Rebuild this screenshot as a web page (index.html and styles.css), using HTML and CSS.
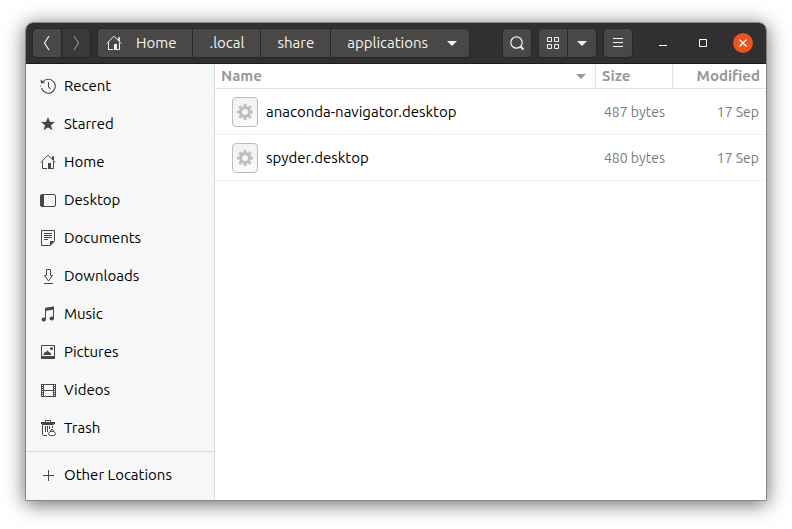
FILE: index.html
```html
<!DOCTYPE html>
<html lang="en">
<head>
<meta charset="utf-8">
<meta name="viewport" content="width=device-width, initial-scale=1">
<title>applications</title>
<link rel="stylesheet" href="styles.css">
</head>
<body>
<svg class="defs" aria-hidden="true">
  <symbol id="home" viewBox="0 0 16 16">
    <path d="M.7 8.5 8 1.2l7.300 7.300M2.500 7.500v7H7M13.500 7.500v7h-2.500M12.500 5V2.500h1V6" fill="none" stroke="currentColor"/>
    <path d="M8 9h3v6H8z" fill="currentColor"/>
  </symbol>
  <symbol id="gear" viewBox="0 0 16 16">
    <circle cx="8" cy="8" r="4.500" fill="none" stroke="currentColor" stroke-width="3"/>
    <path d="M8 0v3M8 13v3M0 8h3M13 8h3M2.300 2.300l2.200 2.200M11.500 11.500l2.200 2.200M2.300 13.700l2.200-2.200M11.500 4.500l2.200-2.200" stroke="currentColor" stroke-width="3"/>
  </symbol>
</svg>
<div class="window">
  <header class="headerbar">
    <nav class="group" aria-label="History">
      <button class="btn" aria-label="Back"><svg class="icon" viewBox="0 0 16 16"><path d="M10 1 5.500 8l4.500 7" fill="none" stroke="currentColor" stroke-width="1.200"/></svg></button>
      <button class="btn inactive" aria-label="Forward" disabled><svg class="icon" viewBox="0 0 16 16"><path d="M6 1l4.500 7L6 15" fill="none" stroke="currentColor" stroke-width="1.200"/></svg></button>
    </nav>
    <nav class="group path" aria-label="Path">
      <button class="btn crumb crumb-home"><svg class="icon"><use href="#home"/></svg><span>Home</span></button>
      <button class="btn crumb">.local</button>
      <button class="btn crumb">share</button>
      <button class="btn crumb crumb-current"><span>applications</span><svg class="arrow" viewBox="0 0 10 5"><path d="M0 0h10L5 5z" fill="currentColor"/></svg></button>
    </nav>
    <div class="spacer"></div>
    <div class="group">
      <button class="btn" aria-label="Search"><svg class="icon" viewBox="0 0 16 16"><circle cx="7.500" cy="7.500" r="5.700" fill="none" stroke="currentColor" stroke-width="1.200"/><path d="m11.500 11.500 3 3" stroke="currentColor" stroke-width="1.800"/></svg></button>
    </div>
    <div class="group">
      <button class="btn" aria-label="Icon view"><svg class="icon" viewBox="0 0 16 16"><path d="M2.500 2.500h4v4h-4zM9.500 2.500h4v4h-4zM2.500 9.500h4v4h-4zM9.500 9.500h4v4h-4z" fill="none" stroke="currentColor"/></svg></button>
      <button class="btn" aria-label="View options"><svg class="arrow" viewBox="0 0 10 5"><path d="M0 0h10L5 5z" fill="currentColor"/></svg></button>
    </div>
    <div class="group">
      <button class="btn" aria-label="Menu"><svg class="icon" viewBox="0 0 16 16"><path d="M3 3.500h10M3 7.500h10M3 11.500h10" stroke="currentColor"/></svg></button>
    </div>
    <div class="controls">
      <button class="control" aria-label="Minimize"><svg class="icon" viewBox="0 0 16 16"><path d="M4 10.500h8" stroke="currentColor"/></svg></button>
      <button class="control" aria-label="Maximize"><svg class="icon" viewBox="0 0 16 16"><path d="M4.500 4.500h7v7h-7z" fill="none" stroke="currentColor"/></svg></button>
      <button class="control close" aria-label="Close"><svg class="icon" viewBox="0 0 16 16"><path d="m4.500 4.500 7 7M11.500 4.500l-7 7" stroke="currentColor" stroke-width="1.300"/></svg></button>
    </div>
  </header>
  <div class="content">
    <aside class="sidebar">
      <nav class="places" aria-label="Places">
        <a href="#recent"><svg class="icon" viewBox="0 0 16 16"><path d="M2.800 3.800A7 7 0 1 1 1.500 10" fill="none" stroke="currentColor" stroke-width="1.100"/><path d="M.500 1.500 1 5.500l4-.500z" fill="currentColor"/><path d="M8.500 4v4.500l2 2.500" fill="none" stroke="currentColor" stroke-width="1.100"/><path d="M.800 7.500v1" stroke="currentColor"/></svg><span>Recent</span></a>
        <a href="#starred"><svg class="icon" viewBox="0 0 16 16"><path d="m8 1 1.900 4.800 5.100.300-4 3.200 1.400 5L8 11.500l-4.400 2.800 1.400-5-4-3.200 5.100-.300z" fill="currentColor"/></svg><span>Starred</span></a>
        <a href="#home-folder"><svg class="icon"><use href="#home"/></svg><span>Home</span></a>
        <a href="#desktop"><svg class="icon" viewBox="0 0 16 16"><rect x=".5" y="2.500" width="15" height="12" rx="1.500" fill="none" stroke="currentColor"/><path d="M1 3h3v11H1z" fill="currentColor"/></svg><span>Desktop</span></a>
        <a href="#documents"><svg class="icon" viewBox="0 0 16 16"><path d="M1.500.500h13v10l-4.500 5H1.500z" fill="none" stroke="currentColor"/><path d="M10 11h5l-5 5z" fill="currentColor"/><path d="M4 3.500h8M4 5.500h8M4 7.500h8M4 9.500h4" stroke="currentColor"/></svg><span>Documents</span></a>
        <a href="#downloads"><svg class="icon" viewBox="0 0 16 16"><path d="M6.500 1.500h4v6h2L8.500 13l-4-5.500h2zM4 15.500h9" fill="none" stroke="currentColor"/></svg><span>Downloads</span></a>
        <a href="#music"><svg class="icon" viewBox="0 0 16 16"><path d="M5.500 13V2.500L13.500 1v11" fill="none" stroke="currentColor"/><path d="M5 2 14 .500v3L5 5z" fill="currentColor"/><ellipse cx="3.800" cy="13.500" rx="2.200" ry="1.900" fill="currentColor"/><ellipse cx="11.800" cy="12.500" rx="2.200" ry="1.900" fill="currentColor"/></svg><span>Music</span></a>
        <a href="#pictures"><svg class="icon" viewBox="0 0 16 16"><path d="M1.500 1.500h13v13h-13z" fill="none" stroke="currentColor"/><path d="M1 12h14v3H1zM3 11l2-3.500 1 1L7.500 6l1.500 2.500L10 8l1.500 3z" fill="currentColor"/><circle cx="11.500" cy="4.500" r="1.500" fill="currentColor"/></svg><span>Pictures</span></a>
        <a href="#videos"><svg class="icon" viewBox="0 0 16 16"><path d="M3.500 2v13M13.500 2v13M3 2.500h11M3 8.500h11M3 14.500h11" stroke="currentColor"/><path d="M2 2v13M15 2v13" stroke="currentColor" stroke-width="2" stroke-dasharray="1 1"/><path d="M1.500 2v13M15.500 2v13" stroke="currentColor"/></svg><span>Videos</span></a>
        <a href="#trash"><svg class="icon" viewBox="0 0 16 16"><path d="M5.500 2V.500h5V2M2.500 5v9.500q0 1 1 1h3.500M5.500 6v6M7.500 6v6M9.500 6v3M12.500 6v2" fill="none" stroke="currentColor"/><path d="M1 2h14v1.500l-1.500 1.500h-11L1 3.500z" fill="currentColor"/><path d="m10.500 11 .5-1.500 1.500 0 1 1.500M10 11.500l-1.500 2q0 2 2 2h3q2 0 2-2L14 11.500z" fill="none" stroke="currentColor"/></svg><span>Trash</span></a>
      </nav>
      <nav class="places other" aria-label="Other">
        <a href="#other"><svg class="icon" viewBox="0 0 16 16"><path d="M8.500 3v11M3 8.500h11" stroke="currentColor"/></svg><span>Other Locations</span></a>
      </nav>
    </aside>
    <main class="files">
      <table>
        <thead>
          <tr>
            <th class="name" scope="col" aria-sort="ascending"><div class="sort"><span>Name</span><svg class="arrow" viewBox="0 0 10 5"><path d="M0 0h10L5 5z" fill="currentColor"/></svg></div></th>
            <th class="size" scope="col">Size</th>
            <th class="modified" scope="col">Modified</th>
          </tr>
        </thead>
        <tbody>
          <tr>
            <td><div class="file"><span class="thumb"><svg class="icon"><use href="#gear"/></svg></span><span>anaconda-navigator.desktop</span></div></td>
            <td class="size">487 bytes</td>
            <td class="modified">17 Sep</td>
          </tr>
          <tr>
            <td><div class="file"><span class="thumb"><svg class="icon"><use href="#gear"/></svg></span><span>spyder.desktop</span></div></td>
            <td class="size">480 bytes</td>
            <td class="modified">17 Sep</td>
          </tr>
        </tbody>
      </table>
    </main>
  </div>
</div>
</body>
</html>
```
FILE: styles.css
```css
* {
  box-sizing: border-box;
}

body {
  margin: 0;
  min-height: 100vh;
  padding: 22px 25px 28px;
  display: flex;
  background: #fff;
  color: #000;
  font: 15px/20px Ubuntu, "Noto Sans", sans-serif;
}

button {
  font: inherit;
  margin: 0;
  padding: 0;
}

.defs {
  position: absolute;
  width: 0;
  height: 0;
}

.icon {
  display: block;
  flex: none;
  width: 16px;
  height: 16px;
}

.arrow {
  display: block;
  flex: none;
  width: 10px;
  height: 5px;
}

.window {
  flex: 1;
  min-width: 0;
  display: flex;
  flex-direction: column;
  overflow: hidden;
  border: 1px solid #878787;
  border-radius: 8px 8px 0 0;
  box-shadow: 0 3px 20px rgba(0, 0, 0, 0.6);
}

.headerbar {
  display: flex;
  align-items: center;
  gap: 6px;
  height: 41px;
  padding: 0 13px 0 6px;
  background: #322f30;
  border-bottom: 1px solid #1c1a1b;
  color: #f4f3f1;
}

.group {
  display: flex;
  height: 30px;
  border: 1px solid #282627;
  border-radius: 5px;
  overflow: hidden;
}

.btn {
  display: flex;
  align-items: center;
  justify-content: center;
  width: 28px;
  border: 0;
  background: #4a4846;
  color: inherit;
}

.btn + .btn {
  width: 29px;
  border-left: 1px solid #282627;
}

.btn.inactive {
  background: #3a3838;
  color: #8e8c8b;
}

.btn.crumb {
  width: auto;
  padding: 0 16px;
}

.btn.crumb-home {
  gap: 14px;
  padding-left: 8px;
}

.btn.crumb-current {
  gap: 19px;
  padding-right: 12px;
}

.spacer {
  flex: 1;
}

.controls {
  display: flex;
  gap: 20px;
  margin-left: 14px;
}

.control {
  display: grid;
  place-items: center;
  width: 20px;
  height: 20px;
  border: 0;
  border-radius: 50%;
  background: none;
  color: #fff;
}

.close {
  background: #e95420;
}

.content {
  flex: 1;
  display: flex;
  background: #fff;
}

.sidebar {
  flex: none;
  width: 189px;
  padding: 3px 0 6px;
  background: #f7f7f7;
  border-right: 1px solid #d8d8d8;
}

.places a {
  display: flex;
  align-items: center;
  gap: 8px;
  height: 38px;
  padding-left: 14px;
  color: #000;
  text-decoration: none;
}

.places .icon {
  color: #474747;
}

.other {
  margin-top: 4px;
  padding-top: 4px;
  border-top: 1px solid #d8d8d8;
}

.files {
  flex: 1;
  min-width: 0;
}

table {
  width: 100%;
  table-layout: fixed;
  border-collapse: separate;
  border-spacing: 0;
}

th,
td {
  padding: 0 6px;
  text-align: left;
  white-space: nowrap;
}

th {
  height: 25px;
  border-bottom: 1px solid #e4e4e4;
  color: #989898;
  font-weight: 700;
}

th + th {
  border-left: 1px solid #e4e4e4;
}

td {
  height: 46px;
  border-bottom: 1px solid #f0f0f0;
}

th.size {
  width: 77px;
}

th.modified {
  width: 94px;
}

td.size,
td.modified {
  padding-right: 7px;
  color: #7a7a7a;
  font-size: 14px;
  text-align: right;
}

th.modified {
  text-align: right;
}

.sort {
  display: flex;
  align-items: center;
  justify-content: space-between;
  padding-right: 3px;
}

.file {
  display: flex;
  align-items: center;
  gap: 8px;
  padding-left: 11px;
}

.thumb {
  display: grid;
  place-items: center;
  width: 26px;
  height: 30px;
  border: 1px solid #bcbcbc;
  border-radius: 4px;
  background: linear-gradient(#f2f2f2, #fafafa);
  color: #bfbfbf;
}
```
